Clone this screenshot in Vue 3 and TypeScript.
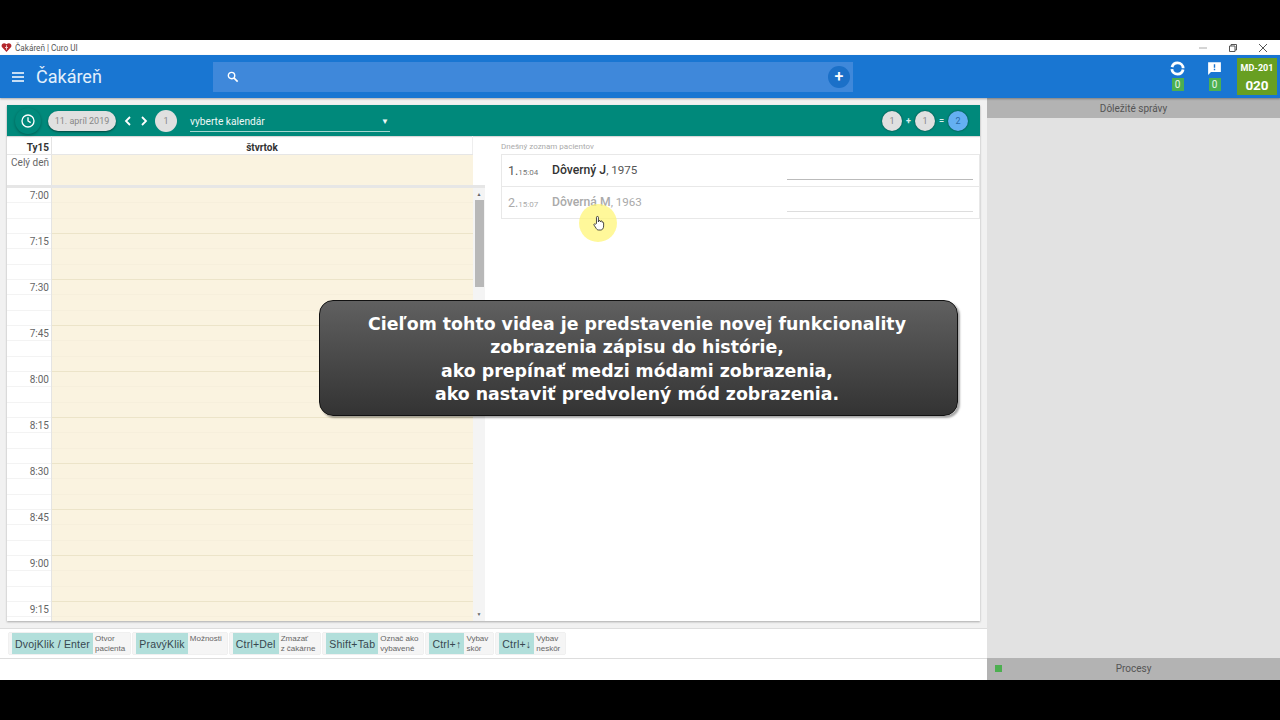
<script setup lang="ts">
const times = ['7:00', '7:15', '7:30', '7:45', '8:00', '8:15', '8:30', '8:45', '9:00', '9:15']

const patients = [
  { nr: '1.', time: '15:04', name: 'Dôverný J', year: ', 1975', dim: false },
  { nr: '2.', time: '15:07', name: 'Dôverná M', year: ', 1963', dim: true }
]

const shortcuts = [
  { key: 'DvojKlik / Enter', text: ['Otvor', 'pacienta'] },
  { key: 'PravýKlik', text: ['Možnosti', '\u00a0'] },
  { key: 'Ctrl+Del', text: ['Zmazať', 'z čakárne'] },
  { key: 'Shift+Tab', text: ['Označ ako', 'vybavené'] },
  { key: 'Ctrl+↑', text: ['Vybav', 'skôr'] },
  { key: 'Ctrl+↓', text: ['Vybav', 'neskôr'] }
]
</script>

<template>
  <div class="screen">
    <div class="blackbar"></div>
    <div class="titlebar">
      <svg class="favicon" viewBox="0 0 24 24"><path d="M12 22 2 11C-1 5 6-1 12 5c6-6 13 0 10 6z" fill="#b3262c"/><path d="M11 7h2v4h2v2h-2v4h-2v-4H9v-2h2z" fill="#f3d9d9"/></svg>
      <span class="wintitle">Čakáreň | Curo UI</span>
      <div class="winbtns">
        <svg viewBox="0 0 10 10"><path d="M1 5h8" stroke="#aaa" fill="none"/></svg>
        <svg viewBox="0 0 10 10"><path d="M1.500 3h5.500v5.500h-5.500zM3 3V1.500h5.500V7H7" stroke="#555" fill="none"/></svg>
        <svg viewBox="0 0 10 10"><path d="M1 1l8 8M9 1l-8 8" stroke="#555" fill="none"/></svg>
      </div>
    </div>

    <header class="appbar">
      <svg class="menu" viewBox="0 0 12 10"><path d="M0 1h12M0 5h12M0 9h12" stroke="#fff" stroke-width="1.400"/></svg>
      <h1>Čakáreň</h1>
      <div class="search">
        <svg class="searchicon" viewBox="0 0 24 24"><circle cx="9.500" cy="9.500" r="5.500" fill="none" stroke="#fff" stroke-width="2.400"/><path d="m13.500 13.500 6.500 6.500" stroke="#fff" stroke-width="2.800"/></svg>
        <span class="plus">+</span>
      </div>
      <div class="status">
        <div class="stat">
          <svg viewBox="0 0 24 24"><circle cx="12" cy="12" r="8" fill="none" stroke="#fff" stroke-width="4" stroke-dasharray="22 3.130" stroke-dashoffset="-1.560"/></svg>
          <span class="zero">0</span>
        </div>
        <div class="stat">
          <svg viewBox="0 0 24 24"><path d="M3 3h18v14H7l-4 4z" fill="#fff"/><path d="M11 6h2v5h-2zM11 12.500h2v2h-2z" fill="#1976d2"/></svg>
          <span class="zero">0</span>
        </div>
        <div class="room"><b>MD-201</b><strong>020</strong></div>
      </div>
    </header>

    <div class="body">
      <main class="left">
        <section class="card">
          <div class="toolbar">
            <span class="clock">
              <svg viewBox="0 0 24 24"><circle cx="12" cy="12" r="9" fill="none" stroke="#fff" stroke-width="2"/><path d="M12 6.500V12l4 2.500" fill="none" stroke="#fff" stroke-width="2"/></svg>
            </span>
            <span class="datepill">11. apríl 2019</span>
            <svg class="chev" viewBox="0 0 8 12"><path d="M6 2 2 6l4 4" fill="none" stroke="#fff" stroke-width="1.800"/></svg>
            <svg class="chev" viewBox="0 0 8 12"><path d="m2 2 4 4-4 4" fill="none" stroke="#fff" stroke-width="1.800"/></svg>
            <span class="num first">1</span>
            <div class="select"><span>vyberte kalendár</span><i>▼</i></div>
            <div class="sum">
              <span class="num small">1</span><em>+</em><span class="num small">1</span><em>=</em><span class="num small blue">2</span>
            </div>
          </div>
          <div class="content">
            <div class="calendar">
              <div class="calhead"><div class="timecol">Ty15</div><div class="dayname">štvrtok</div></div>
              <div class="allday"><div class="timecol">Celý deň</div><div class="daycell"></div></div>
              <div class="grid">
                <div class="rows">
                  <div v-for="t in times" :key="t" class="hour">
                    <div class="timecol">{{ t }}</div>
                    <div class="slots"><div></div><div></div><div></div></div>
                  </div>
                </div>
                <div class="scrollbar">
                  <span class="arrow">▲</span>
                  <div class="thumb"></div>
                  <span class="arrow down">▼</span>
                </div>
              </div>
            </div>
            <div class="patients">
              <div class="listlabel">Dnešný zoznam pacientov</div>
              <div class="list">
                <div v-for="p in patients" :key="p.nr" class="patient" :class="{ dim: p.dim }">
                  <span class="nr">{{ p.nr }}<small>{{ p.time }}</small></span>
                  <span class="name"><b>{{ p.name }}</b>{{ p.year }}</span>
                  <span class="note"></span>
                </div>
              </div>
            </div>
          </div>
        </section>
        <div class="shortcuts">
          <div v-for="s in shortcuts" :key="s.key" class="shortcut">
            <span class="key">{{ s.key }}</span>
            <span class="desc"><span v-for="l in s.text" :key="l">{{ l }}</span></span>
          </div>
        </div>
        <div class="statusline"></div>
      </main>
      <aside class="right">
        <div class="panelhead">Dôležité správy</div>
        <div class="panelbody"></div>
        <div class="panelhead procesy"><span class="led"></span>Procesy</div>
      </aside>
    </div>
    <div class="blackbar"></div>

    <div class="caption">
      Cieľom tohto videa je predstavenie novej funkcionality<br>
      zobrazenia zápisu do histórie,<br>
      ako prepínať medzi módami zobrazenia,<br>
      ako nastaviť predvolený mód zobrazenia.
    </div>

    <div class="pointer">
      <svg viewBox="0 0 16 20"><path d="M5.500 10V2.500a1.200 1.200 0 0 1 2.400 0V8l.2-1a1.100 1.100 0 0 1 2.100.3l.1.7.2-.4a1 1 0 0 1 2 .4v.6l.3-.2a1 1 0 0 1 1.500.9V13c0 3-1.500 5-3.500 5H8c-1.500 0-2.300-1-3-2.200L2.500 12c-.7-1.200.8-2.200 1.700-1.200z" fill="#fff" stroke="#222" stroke-width="1"/></svg>
    </div>
  </div>
</template>

<style scoped>
.screen {
  position: relative;
  width: 1280px;
  height: 720px;
  display: flex;
  flex-direction: column;
  overflow: hidden;
  font-family: Roboto, "Liberation Sans", sans-serif;
  color: #444;
}

.blackbar {
  height: 40px;
  flex: none;
  background: #000;
}

.titlebar {
  height: 15px;
  flex: none;
  display: flex;
  align-items: center;
  background: #fff;
  padding-left: 1px;
}

.favicon {
  width: 11px;
  height: 11px;
}

.wintitle {
  margin-left: 3px;
  font-size: 8.200px;
  color: #555;
}

.winbtns {
  margin-left: auto;
  display: flex;
  gap: 20px;
  padding-right: 12px;
}

.winbtns svg {
  width: 10px;
  height: 10px;
}

.appbar {
  height: 43px;
  flex: none;
  display: flex;
  align-items: center;
  background: #1976d2;
  box-shadow: 0 1px 2px rgba(0, 0, 0, .3);
  position: relative;
  z-index: 1;
}

.menu {
  width: 12px;
  height: 10px;
  margin-left: 12px;
}

h1 {
  margin: 0 0 0 12px;
  width: 177px;
  font-size: 18px;
  font-weight: 400;
  color: #e3f0fb;
}

.search {
  width: 640px;
  height: 30px;
  display: flex;
  align-items: center;
  justify-content: space-between;
  background: #3f88da;
  padding: 0 3px 0 13px;
  box-sizing: border-box;
}

.searchicon {
  width: 14px;
  height: 14px;
}

.plus {
  width: 22px;
  height: 22px;
  border-radius: 50%;
  background: #1b70c8;
  color: #fff;
  font-size: 16px;
  font-weight: 500;
  line-height: 22px;
  text-align: center;
}

.status {
  margin-left: auto;
  display: flex;
  align-items: center;
  padding-right: 3px;
}

.stat {
  width: 37px;
  margin-bottom: 3px;
  display: flex;
  flex-direction: column;
  align-items: center;
  gap: 1px;
}

.stat svg {
  width: 17px;
  height: 17px;
}

.zero {
  width: 12px;
  height: 13px;
  background: #4caf50;
  color: #e8f5e9;
  font-size: 10px;
  line-height: 13px;
  text-align: center;
}

.room {
  width: 40px;
  height: 37px;
  margin-left: 4px;
  display: flex;
  flex-direction: column;
  align-items: center;
  justify-content: center;
  background: #689f22;
  color: #fff;
}

.room b {
  font-size: 9px;
  font-weight: 700;
  line-height: 16px;
}

.room strong {
  font-size: 13.500px;
  font-weight: 700;
  line-height: 18px;
}

.body {
  flex: 1;
  display: flex;
  min-height: 0;
}

.left {
  width: 987px;
  display: flex;
  flex-direction: column;
  background: #f1f1f1;
}

.card {
  height: 516px;
  margin: 7px;
  display: flex;
  flex-direction: column;
  background: #fff;
  box-shadow: 0 1px 2px rgba(0, 0, 0, .3);
}

.toolbar {
  height: 31px;
  flex: none;
  display: flex;
  align-items: center;
  background: #00897b;
  padding: 0 12px 0 8px;
  box-shadow: 0 1px 1px rgba(0, 0, 0, .15);
}

.clock {
  width: 26px;
  height: 26px;
  flex: none;
  display: flex;
  align-items: center;
  justify-content: center;
  border-radius: 50%;
  background: #00897b;
  box-shadow: 0 1px 3px rgba(0, 0, 0, .3);
}

.clock svg {
  width: 16px;
  height: 16px;
}

.datepill {
  width: 68px;
  height: 20px;
  margin: 0 8px 0 7px;
  flex: none;
  border-radius: 10px;
  background: #e0e0e0;
  box-shadow: 0 1px 2px rgba(0, 0, 0, .5);
  color: #888;
  font-size: 9px;
  line-height: 20px;
  text-align: center;
}

.chev {
  width: 8px;
  height: 12px;
  margin-right: 8px;
}

.num {
  width: 22px;
  height: 22px;
  flex: none;
  border-radius: 50%;
  background: #e0e0e0;
  color: #888;
  font-size: 9px;
  line-height: 22px;
  text-align: center;
}

.first {
  margin-left: -1px;
}

.select {
  width: 200px;
  height: 20px;
  margin: 2px 0 0 13px;
  display: flex;
  align-items: center;
  justify-content: space-between;
  box-sizing: border-box;
  border-bottom: 1px solid #a5d6cf;
  color: #eef8f6;
  font-size: 10.200px;
}

.select i {
  font-style: normal;
  font-size: 8px;
  padding-right: 1px;
}

.sum {
  margin-left: auto;
  display: flex;
  align-items: center;
  gap: 3px;
}

.sum em {
  font-style: normal;
  width: 7px;
  text-align: center;
  color: #d9efec;
  font-size: 9px;
  font-weight: 700;
}

.small {
  width: 20px;
  height: 20px;
  line-height: 20px;
  box-shadow: 0 0 2px rgba(0, 0, 0, .6);
}

.blue {
  background: #64b0f2;
  color: #2a6aa8;
}

.content {
  flex: 1;
  display: flex;
  min-height: 0;
}

.calendar {
  width: 478px;
  display: flex;
  flex-direction: column;
  min-height: 0;
}

.timecol {
  width: 42px;
  flex: none;
  padding-right: 2px;
  text-align: right;
  font-size: 10px;
  color: #666;
  border-right: 1px solid #e4e4e4;
}

.calhead {
  height: 19px;
  flex: none;
  display: flex;
  border-bottom: 1px solid #e6e6e6;
  box-sizing: border-box;
  margin-right: 12px;
  line-height: 23px;
}

.calhead .timecol {
  font-weight: 700;
  color: #333;
}

.dayname {
  flex: 1;
  text-align: center;
  font-size: 10px;
  font-weight: 700;
  color: #333;
  border-right: 1px solid #eee;
}

.allday {
  height: 30px;
  flex: none;
  display: flex;
  margin-right: 12px;
  line-height: 15px;
}

.daycell {
  flex: 1;
  background: #faf3e0;
}

.grid {
  flex: 1;
  display: flex;
  min-height: 0;
  overflow: hidden;
  border-top: 3px solid #e6e6e6;
}

.rows {
  flex: 1;
  min-width: 0;
}

.hour {
  height: 46px;
  display: flex;
  background: repeating-linear-gradient(#fff 0 14.330px, #f3f3f3 14.330px 15.330px);
}

.hour .timecol {
  padding-top: 2px;
  line-height: 11px;
}

.slots {
  flex: 1;
  display: flex;
  flex-direction: column;
  background: #faf3e0;
}

.slots div {
  flex: 1;
  border-bottom: 1px solid #f6efdc;
}

.slots div:last-child {
  border-bottom-color: #ece4c9;
}

.scrollbar {
  width: 12px;
  flex: none;
  display: flex;
  flex-direction: column;
  align-items: center;
  background: #f4f4f4;
}

.arrow {
  height: 12px;
  flex: none;
  font-size: 5px;
  line-height: 12px;
  color: #666;
}

.down {
  margin-top: auto;
  margin-bottom: 1px;
}

.thumb {
  width: 9px;
  height: 87px;
  background: #b8b8b8;
}

.patients {
  flex: 1;
  min-width: 0;
  padding: 0 0 0 16px;
}

.listlabel {
  height: 18px;
  font-size: 8px;
  line-height: 22px;
  color: #aaa;
}

.list {
  border: 1px solid #e8e8e8;
}

.patient {
  height: 32px;
  display: flex;
  align-items: center;
  box-sizing: border-box;
  padding: 0 0 1px 6px;
  position: relative;
  font-size: 11.600px;
  color: #555;
  border-bottom: 1px solid #e8e8e8;
}

.patient:last-child {
  height: 31px;
  border-bottom: 0;
}

.nr {
  width: 44px;
  flex: none;
  font-size: 12.500px;
}

.nr small {
  font-size: 8px;
  color: #777;
}

.name b {
  font-size: 12.200px;
  font-weight: 500;
  color: #333;
}

.note {
  position: absolute;
  left: 285px;
  right: 6px;
  bottom: 6px;
  border-bottom: 1px solid #bbb;
}

.dim,
.dim .nr small,
.dim .name b {
  color: #aaa;
}

.dim .note {
  border-bottom-color: #ddd;
}

.shortcuts {
  height: 31px;
  flex: none;
  display: flex;
  align-items: center;
  gap: 3px;
  box-sizing: border-box;
  padding-left: 9px;
  background: #fff;
  border-top: 1px solid #ddd;
  border-bottom: 1px solid #ddd;
}

.shortcut {
  height: 21px;
  display: flex;
  background: #f5f5f5;
  box-shadow: 0 0 1px rgba(0, 0, 0, .35);
  padding-left: 3px;
  font-family: "Liberation Sans", Arial, sans-serif;
}

.key {
  display: flex;
  align-items: center;
  padding: 0 3px;
  background: #b2dfdb;
  color: #37474f;
  font-size: 10.500px;
  letter-spacing: .2px;
}

.desc {
  display: flex;
  flex-direction: column;
  justify-content: center;
  padding: 0 5px 0 2px;
  color: #666;
  font-size: 8px;
  line-height: 10px;
}

.statusline {
  flex: 1;
  background: #fff;
}

.right {
  flex: 1;
  display: flex;
  flex-direction: column;
  background: #e2e2e2;
}

.panelhead {
  height: 20px;
  flex: none;
  position: relative;
  background: #b3b3b3;
  color: #555;
  font-size: 10px;
  line-height: 21px;
  text-align: center;
}

.panelbody {
  flex: 1;
}

.procesy {
  height: 22px;
  line-height: 22px;
}

.led {
  position: absolute;
  left: 8px;
  top: 7px;
  width: 7px;
  height: 7px;
  background: #4caf50;
}

.caption {
  position: absolute;
  left: 319px;
  top: 300px;
  width: 639px;
  height: 116px;
  box-sizing: border-box;
  padding: 12px 3px 0 0;
  border: 1px solid #111;
  border-radius: 14px;
  background: linear-gradient(#606060, #333);
  box-shadow: 2px 2px 2px rgba(0, 0, 0, .35);
  color: #fff;
  font-family: "DejaVu Sans", sans-serif;
  font-size: 17.350px;
  font-weight: 700;
  line-height: 23.300px;
  text-align: center;
}

.pointer {
  position: absolute;
  left: 579px;
  top: 204px;
  width: 38px;
  height: 38px;
  display: flex;
  align-items: center;
  justify-content: center;
  border-radius: 50%;
  background: rgba(255, 245, 120, .75);
}

.pointer svg {
  width: 13px;
  height: 17px;
}
</style>
